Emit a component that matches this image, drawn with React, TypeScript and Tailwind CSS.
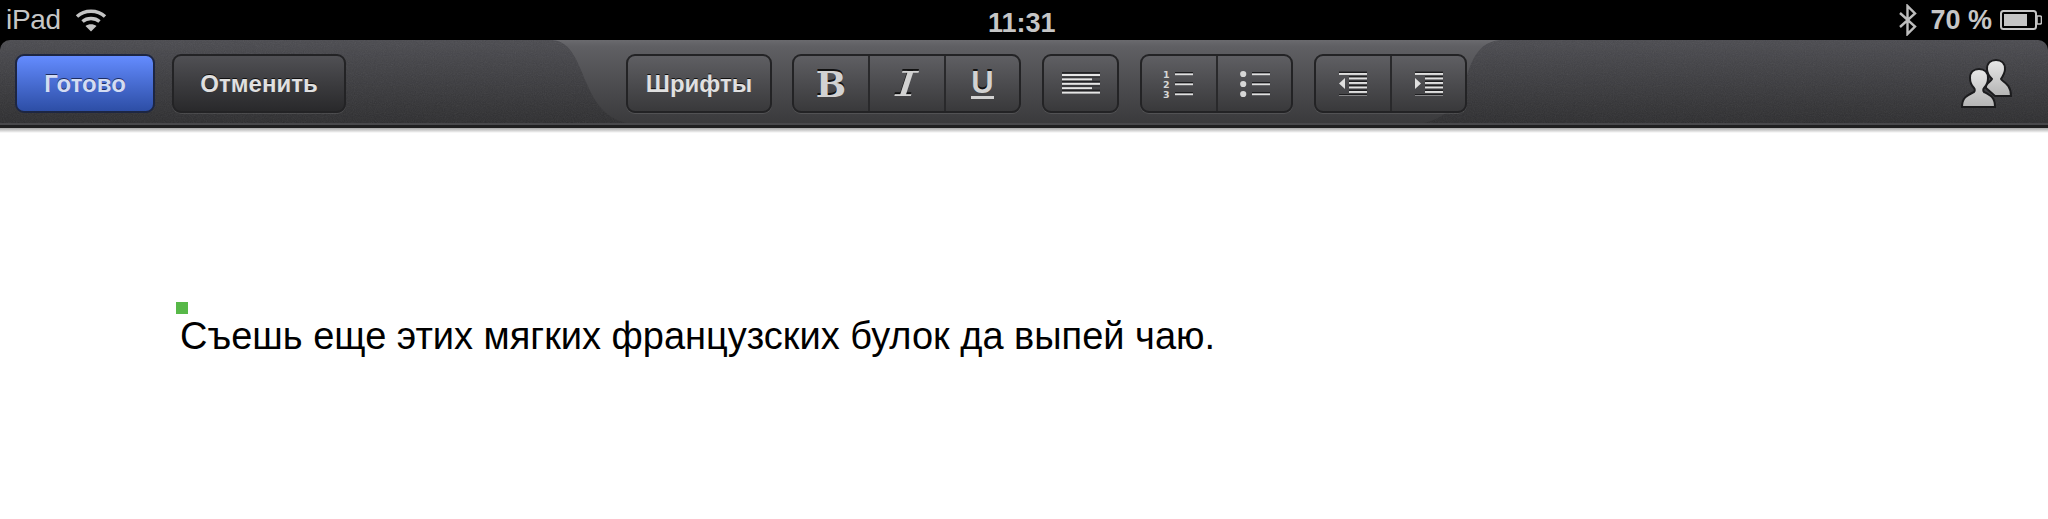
const font = "font-['Liberation_Sans',Arial,sans-serif]";

function Wifi() {
  return (
    <svg width="32" height="24" viewBox="0 0 32 24" fill="none" stroke="#c4c4c4" strokeWidth="3.4">
      <path d="M2 8.5 C9.5 1.5 22.5 1.5 30 8.5" />
      <path d="M7.5 13.5 C12 9.5 20 9.5 24.5 13.5" />
      <path d="M16 23.5 L10.5 18 C13.5 15.5 18.5 15.5 21.5 18 Z" fill="#c4c4c4" stroke="none" />
    </svg>
  );
}

function Bluetooth() {
  return (
    <svg width="20" height="32" viewBox="0 0 20 32" fill="none" stroke="#bdbdbd" strokeWidth="2.4">
      <path d="M2 9 L17 22.5 L9.5 30 L9.5 2 L17 9.5 L2 23" />
    </svg>
  );
}

function Battery() {
  return (
    <svg width="42" height="20" viewBox="0 0 42 20">
      <rect x="1" y="1" width="35" height="18" rx="2.5" fill="none" stroke="#c4c4c4" strokeWidth="2" />
      <rect x="4" y="4" width="23" height="12" fill="#c4c4c4" />
      <path d="M37 6 h3 a1.5 1.5 0 0 1 1.5 1.5 v5 a1.5 1.5 0 0 1 -1.5 1.5 h-3 z" fill="none" stroke="#c4c4c4" strokeWidth="1.6" />
    </svg>
  );
}

function People() {
  return (
    <svg width="52" height="50" viewBox="0 0 52 50">
      <defs>
        <linearGradient id="person" x1="0" y1="0" x2="0" y2="1">
          <stop offset="0" stopColor="#e8e8e8" />
          <stop offset="1" stopColor="#b4b4b4" />
        </linearGradient>
      </defs>
      <g stroke="#1c1c1e" strokeWidth="2" fill="url(#person)">
        <path d="M25 29 C24 24 30 23 31 20 C27 16 26 12 26 10 C26 4 30 1 35 1 C40 1 44 4 44 10 C44 14 42 17 40 20 C41 23 50 24 50 37 L34 37 Z" />
        <path d="M1 48 C1 38 7 36 13 33 C14 32 14 30 13 29 C10 26 9 22 9 19 C9 13 13 10 18 10 C23 10 27 13 27 19 C27 22 26 26 23 29 C22 30 22 32 23 33 C29 36 34 38 34 48 Z" />
      </g>
    </svg>
  );
}

function AlignIcon() {
  const rows = [0, 1, 2, 3, 4, 5];
  return (
    <svg width="38" height="24" viewBox="0 0 38 24">
      {rows.map((i) => (
        <g key={i}>
          <rect x="0" y={i * 4.4 + 2} width={i % 2 ? 30 : 38} height="2" fill="#e6e6e6" />
          {i < 5 && <rect x="0" y={i * 4.4} width="38" height="1.6" fill="#1d1d1f" opacity={i % 2 ? 0.45 : 0.9} />}
        </g>
      ))}
    </svg>
  );
}

function NumberedIcon() {
  return (
    <svg width="32" height="32" viewBox="0 0 32 32">
      <g fill="#d6d6d6" fontSize="9.5" fontWeight="700" fontFamily="DejaVu Sans">
        <text x="0" y="10">1</text>
        <text x="0" y="20">2</text>
        <text x="0" y="30">3</text>
      </g>
      {[5, 15, 25].map((y) => (
        <g key={y}>
          <rect x="12" y={y - 1} width="18" height="1.4" fill="#1d1d1f" />
          <rect x="12" y={y + 0.4} width="18" height="1.8" fill="#e0e0e0" />
        </g>
      ))}
    </svg>
  );
}

function BulletIcon() {
  return (
    <svg width="30" height="28" viewBox="0 0 30 28">
      {[3, 13, 23].map((y) => (
        <g key={y}>
          <circle cx="3.2" cy={y + 1} r="3.1" fill="#d6d6d6" />
          <rect x="12" y={y - 1} width="18" height="1.4" fill="#1d1d1f" />
          <rect x="12" y={y + 0.4} width="18" height="1.8" fill="#e0e0e0" />
        </g>
      ))}
    </svg>
  );
}

function IndentIcon({ flip }: { flip?: boolean }) {
  return (
    <svg width="28" height="25" viewBox="0 0 28 25">
      {[0, 1, 2, 3, 4, 5].map((i) => {
        const full = i === 0 || i === 5;
        const x = full ? 0 : 10;
        return (
          <g key={i}>
            <rect x={x} y={i * 4.5 + 0.6} width={full ? 28 : 18} height="1.4" fill="#1d1d1f" />
            <rect x={x} y={i * 4.5 + 2} width={full ? 28 : 18} height="1.9" fill="#e0e0e0" />
          </g>
        );
      })}
      {flip ? <path d="M0 7 L6 12.5 L0 18 Z" fill="#e0e0e0" /> : <path d="M6 7 L0 12.5 L6 18 Z" fill="#e0e0e0" />}
    </svg>
  );
}

function TabShape() {
  return (
    <svg className="absolute left-0 top-0" width="2048" height="85" viewBox="0 0 2048 85">
      <defs>
        <linearGradient id="tab" x1="0" y1="0" x2="0" y2="1">
          <stop offset="0" stopColor="#6a6a6e" />
          <stop offset="0.08" stopColor="#5f5f63" />
          <stop offset="1" stopColor="#39393b" />
        </linearGradient>
        <filter id="grain">
          <feTurbulence type="fractalNoise" baseFrequency="0.9" numOctaves="2" />
          <feColorMatrix type="saturate" values="0" />
        </filter>
      </defs>
      <rect width="2048" height="85" filter="url(#grain)" opacity="0.1" />
      <path
        d="M552 0 C572 1 578 24 587 44 C598 70 612 85 645 85 L1405 85 C1432 85 1450 75 1460 55 C1470 30 1472 3 1500 0 Z"
        fill="url(#tab)"
      />
    </svg>
  );
}

const dark = "border-2 border-[#232325] rounded-[9px] shadow-[0_1px_0_rgba(255,255,255,0.1)]";
const tabBtn = "bg-gradient-to-b from-[#5f5f63] to-[#39393b]";
const label = "text-[24px] font-bold text-[#e0e0e0] [text-shadow:0_-1px_0_#111]";
const glyph = "font-['DejaVu_Serif',serif] leading-[44px] text-[#d2d2d2] [text-shadow:0_-2px_0_#111]";

function Segment({ className, children }: { className: string; children: React.ReactNode }) {
  return <div className={`flex items-center justify-center h-full ${className}`}>{children}</div>;
}

export default function App() {
  return (
    <div className={`min-h-screen bg-white ${font}`}>
      {/* status bar */}
      <div className="bg-black h-[40px] flex items-center text-[#c6c6c6] relative">
        <span className="ml-[6px] text-[28px] tracking-[-0.3px]">iPad</span>
        <span className="ml-[14px] flex"><Wifi /></span>
        <span className="absolute left-[988px] top-[3px] text-[27px] font-bold">11:31</span>
        <div className="ml-auto mr-[6px] flex items-center">
          <Bluetooth />
          <span className="ml-[12px] text-[27px] font-bold">70 %</span>
          <span className="ml-[8px] flex"><Battery /></span>
        </div>
      </div>

      {/* toolbar */}
      <div className="bg-black">
        <div className="relative h-[88px] rounded-t-[10px] overflow-hidden bg-gradient-to-b from-[#4b4b50] to-[#2d2d2f] border-b-[3px] border-[#1f1f20]">
          <TabShape />
          <div className="absolute left-0 right-0 bottom-0 h-[2px] bg-[#48484b]" />
          <div className="relative flex pl-[15px] pt-[14px] h-[73px]">
            <button className="w-[140px] h-[59px] rounded-[9px] border-2 border-[#1d2642] bg-gradient-to-b from-[#648cff] to-[#2d4ea6] text-[24px] font-bold text-[#d3dcf3] [text-shadow:0_-1px_0_#1c2c60]">
              Готово
            </button>
            <button className={`ml-[17px] w-[174px] h-[59px] ${dark} bg-gradient-to-b from-[#505054] to-[#29292b] ${label}`}>
              Отменить
            </button>
            <button className={`ml-[280px] w-[146px] h-[59px] ${dark} ${tabBtn} ${label}`}>
              Шрифты
            </button>

            <div className={`ml-[20px] w-[229px] h-[59px] flex ${dark} ${tabBtn} divide-x-2 divide-[#29292b]`}>
              <Segment className="w-[76px]">
                <span className={`${glyph} font-bold text-[36px]`}>B</span>
              </Segment>
              <Segment className="w-[76px]">
                <span className={`${glyph} inline-block italic text-[34px] scale-x-[1.7]`}>I</span>
              </Segment>
              <Segment className="flex-1">
                <span className="text-[31px] font-bold leading-[27px] text-[#d2d2d2] border-b-[3px] border-[#d2d2d2] [text-shadow:0_-2px_0_#111]">U</span>
              </Segment>
            </div>

            <div className={`ml-[21px] w-[77px] h-[59px] flex items-center justify-center ${dark} ${tabBtn}`}>
              <AlignIcon />
            </div>

            <div className={`ml-[21px] w-[153px] h-[59px] flex ${dark} ${tabBtn} divide-x-2 divide-[#29292b]`}>
              <Segment className="w-[76px]"><NumberedIcon /></Segment>
              <Segment className="flex-1"><BulletIcon /></Segment>
            </div>

            <div className={`ml-[21px] w-[153px] h-[59px] flex ${dark} ${tabBtn} divide-x-2 divide-[#29292b]`}>
              <Segment className="w-[76px]"><IndentIcon /></Segment>
              <Segment className="flex-1"><IndentIcon flip /></Segment>
            </div>

            <div className="ml-auto mr-[35px] mt-[5px]">
              <People />
            </div>
          </div>
        </div>
      </div>
      <div className="h-[5px] bg-gradient-to-b from-[#a8a8a8] to-white" />

      {/* document */}
      <div className="pl-[176px] pt-[169px]">
        <div className="w-[12px] h-[12px] bg-[#57b848]" />
        <p className="ml-[4px] text-[38px] leading-[44px] text-black">
          Съешь еще этих мягких французских булок да выпей чаю.
        </p>
      </div>
    </div>
  );
}
